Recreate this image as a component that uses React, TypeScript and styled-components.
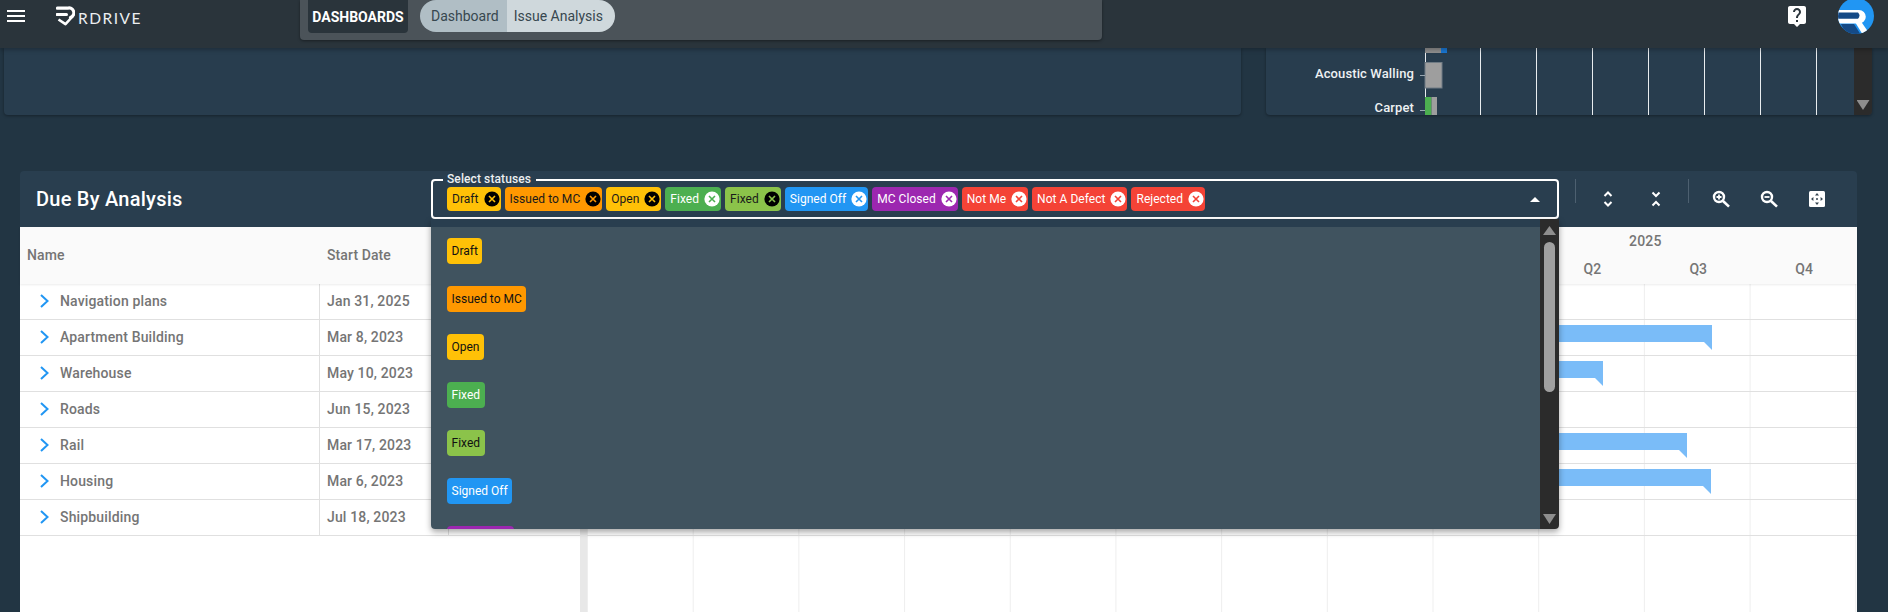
import React from "react";
import styled, { createGlobalStyle } from "styled-components";

const Global = createGlobalStyle`
  html, body { margin: 0; padding: 0; height: 612px; overflow: hidden; background: #223543; font-family: Roboto, "Liberation Sans", sans-serif; }
  #root { height: 612px; }
  * { box-sizing: border-box; }
`;

const Page = styled.div`display:flex;flex-direction:column;height:612px;overflow:hidden;background:#223543;`;

const Header = styled.header`
  flex:0 0 48px;display:flex;align-items:flex-start;background:#2a343b;position:relative;z-index:5;
  box-shadow:0 2px 4px rgba(0,0,0,.25);
`;
const Burger = styled.div`
  margin:10px 0 0 7px;width:18px;height:12px;display:flex;flex-direction:column;justify-content:space-between;
  span{display:block;height:2px;background:#fff;}
`;
const Logo = styled.div`display:flex;margin:5px 0 0 31px;width:244px;`;
const LogoText = styled.span`
  font-family:Lato,Roboto,sans-serif;font-size:15.5px;font-weight:400;color:#eceff1;letter-spacing:1.5px;line-height:20px;margin:3px 0 0 3px;
`;
const NavPanel = styled.nav`
  width:802px;height:40px;background:#4b5359;border-radius:0 0 4px 4px;display:flex;align-items:flex-start;padding-left:8px;
  box-shadow:0 1px 3px rgba(0,0,0,.4);
`;
const NavLabel = styled.div`
  width:100px;height:33px;background:#2a343b;border-radius:0 0 4px 4px;color:#fff;font-size:14px;font-weight:700;
  display:flex;align-items:center;justify-content:center;
`;
const Pills = styled.div`display:flex;margin-left:12px;height:32px;overflow:hidden;border-radius:16px;`;
const Pill = styled.div<{ $active?: boolean }>`
  background:${(p) => (p.$active ? "#cfd8dc" : "#b0bec5")};color:#37474f;font-size:14px;display:flex;align-items:center;
  padding:${(p) => (p.$active ? "0 12px 0 7px" : "0 8px 0 11px")};height:32px;
`;
const HeaderRight = styled.div`margin-left:auto;display:flex;align-items:flex-start;padding-right:14px;`;
const HelpIcon = styled.svg`width:24px;height:24px;margin-top:4px;fill:#fff;`;
const Avatar = styled.svg`width:36px;height:34px;margin-left:29px;display:block;`;

const TopRow = styled.section`flex:0 0 67px;display:flex;padding:0 16px 0 4px;gap:25px;`;
const TopPanel = styled.div<{ $w: number }>`
  width:${(p) => p.$w}px;height:67px;background:#283d4e;border-radius:0 0 4px 4px;display:flex;overflow:hidden;
  box-shadow:0 1px 3px rgba(0,0,0,.35);
`;
const ChartSvg = styled.svg`flex:1;height:67px;display:block;`;
const ChartLabel = styled.text`font:500 13px Roboto,sans-serif;fill:#eef1f3;letter-spacing:.12px;`;
const PanelScroll = styled.div`flex:0 0 18px;background:#2b2b2b;display:flex;flex-direction:column;justify-content:flex-end;align-items:center;padding-bottom:5px;`;
const ArrowDown = styled.div`width:13px;height:10px;background:#8e8e8e;clip-path:polygon(0 0,100% 0,50% 100%);`;
const ArrowUp = styled.div`width:13px;height:9px;background:#8e8e8e;clip-path:polygon(50% 0,100% 100%,0 100%);`;

const Card = styled.section`flex:1;margin:56px 31px 0 20px;display:flex;flex-direction:column;border-radius:4px 4px 0 0;min-height:0;`;
const CardHeader = styled.div`
  flex:0 0 56px;background:#293e4f;border-radius:4px 4px 0 0;display:flex;align-items:flex-start;padding:8px 0 0 16px;position:relative;z-index:3;
`;
const Title = styled.h2`flex:0 0 395px;margin:0;height:40px;display:flex;align-items:center;font-size:20px;font-weight:500;color:#fff;letter-spacing:.25px;`;
const Select = styled.div`
  flex:0 0 1128px;height:40px;border:2px solid #fff;border-radius:4px;position:relative;display:flex;align-items:center;padding:0 0 0 14px;gap:4px;
`;
const SelectLabel = styled.label`
  position:absolute;top:-9px;left:10px;padding:0 5px 0 4px;background:#293e4f;color:#eceff1;font-size:12px;line-height:14px;font-weight:500;letter-spacing:.1px;
`;
const Chip = styled.div<{ $bg: string; $dark?: boolean }>`
  height:24px;border-radius:4px;background:${(p) => p.$bg};color:${(p) => (p.$dark ? "#1a1a1a" : "#fff")};
  display:flex;align-items:center;font-size:12px;padding:0 1px 0 5px;gap:5px;white-space:nowrap;letter-spacing:.035px;
`;
const ChipX = styled.svg`width:16px;height:16px;flex:none;display:block;`;
const Caret = styled.div`position:absolute;right:17px;top:16px;width:10px;height:5px;background:#fff;clip-path:polygon(50% 0,100% 100%,0 100%);`;
const Dropdown = styled.div`
  position:absolute;left:-2px;right:-2px;top:38px;height:310px;display:flex;border-radius:0 0 4px 4px;overflow:hidden;
  box-shadow:0 3px 6px rgba(0,0,0,.35);z-index:4;
`;
const List = styled.div`
  flex:1;background:linear-gradient(#293e4f 8px,#40535f 8px);padding:19px 0 0 16px;display:flex;flex-direction:column;gap:22px;overflow:hidden;align-items:flex-start;
`;
const OptionChip = styled.div<{ $bg: string; $dark?: boolean }>`
  flex:none;height:26px;border-radius:4px;background:${(p) => p.$bg};color:${(p) => (p.$dark ? "#111" : "#fff")};
  display:flex;align-items:center;font-size:12px;padding:0 4.5px;white-space:nowrap;
`;
const Track = styled.div`flex:0 0 19px;background:#2b2b2b;display:flex;flex-direction:column;align-items:center;padding:7px 0 5px;`;
const Thumb = styled.div`width:11px;height:150px;margin-top:7px;margin-bottom:auto;border-radius:6px;background:#a0a0a0;`;
const Toolbar = styled.div`display:flex;align-items:flex-start;padding-left:16px;`;
const Divider = styled.div<{ $ml?: number }>`width:1px;height:24px;background:#4d6070;margin:0 8px 0 ${(p) => p.$ml ?? 0}px;`;
const ToolButton = styled.div`width:48px;height:40px;display:flex;align-items:center;justify-content:center;`;
const ToolIcon = styled.svg`width:20px;height:20px;display:block;`;

const Body = styled.div`flex:1;display:flex;background:#fff;min-height:0;position:relative;z-index:1;`;
const LeftPane = styled.div`flex:0 0 560px;display:flex;flex-direction:column;`;
const Splitter = styled.div`flex:0 0 7px;background:#e8e8e8;`;
const RightPane = styled.div`flex:1;display:flex;flex-direction:column;min-width:0;`;
const HeadRow = styled.div`
  flex:0 0 57px;display:grid;grid-template-columns:300px 129px 1fr;background:#fafafa;box-shadow:0 1px 2px rgba(0,0,0,.08);position:relative;z-index:1;
`;
const HeadCell = styled.div`padding:0 0 1px 7px;display:flex;align-items:center;font-size:14px;font-weight:500;color:#757575;letter-spacing:.1px;`;
const Row = styled.div`height:36px;display:grid;grid-template-columns:300px 129px 1fr;border-bottom:1px solid #e0e0e0;`;
const NameCell = styled.div`
  display:flex;align-items:center;padding:0 0 2px 20px;gap:11px;border-right:1px solid #e0e0e0;font-size:14px;font-weight:500;color:#757575;letter-spacing:.15px;
`;
const Chevron = styled.svg`width:9px;height:14px;flex:none;`;
const DateCell = styled.div`display:flex;align-items:center;padding:0 0 2px 7px;border-right:1px solid #e0e0e0;font-size:14px;font-weight:500;color:#757575;letter-spacing:.15px;`;
const Timeline = styled.div`
  flex:0 0 57px;display:grid;grid-template-columns:repeat(12,1fr);grid-template-rows:28px 28px;background:#fafafa;box-shadow:0 1px 2px rgba(0,0,0,.08);position:relative;z-index:1;
`;
const Year = styled.div`grid-column:9 / span 4;display:flex;align-items:center;justify-content:center;font-size:14px;font-weight:500;color:#757575;letter-spacing:.2px;`;
const Quarter = styled.div<{ $col: number }>`grid-row:2;grid-column:${(p) => p.$col};display:flex;align-items:center;justify-content:center;padding-bottom:1px;font-size:14px;font-weight:500;color:#757575;`;
const GanttBody = styled.div`
  flex:1;background-image:linear-gradient(to right,transparent calc(100% - 1px),#eeeeee calc(100% - 1px));background-size:105.7px 100%;background-position:1px 0;
`;
const GanttRow = styled.div`height:36px;border-bottom:1px solid #e0e0e0;`;
const Bar = styled.div<{ $start: number; $end: number }>`
  margin-left:${(p) => p.$start - 587}px;width:${(p) => p.$end - p.$start}px;height:25px;position:relative;top:5px;background:#7abcf8;
  clip-path:polygon(0 0,100% 0,100% 100%,calc(100% - 8px) 17px,0 17px);
`;

const statuses = [
  { name: "Draft", bg: "#ffc107", dark: true },
  { name: "Issued to MC", bg: "#ff9800", dark: true },
  { name: "Open", bg: "#ffc107", dark: true },
  { name: "Fixed", bg: "#4caf50" },
  { name: "Fixed", bg: "#8bc34a", dark: true },
  { name: "Signed Off", bg: "#2196f3" },
  { name: "MC Closed", bg: "#9c27b0" },
  { name: "Not Me", bg: "#f44336" },
  { name: "Not A Defect", bg: "#f44336" },
  { name: "Rejected", bg: "#f44336" },
];

const rows = [
  { name: "Navigation plans", date: "Jan 31, 2025" },
  { name: "Apartment Building", date: "Mar 8, 2023", end: 1712 },
  { name: "Warehouse", date: "May 10, 2023", end: 1603 },
  { name: "Roads", date: "Jun 15, 2023" },
  { name: "Rail", date: "Mar 17, 2023", end: 1687 },
  { name: "Housing", date: "Mar 6, 2023", end: 1711 },
  { name: "Shipbuilding", date: "Jul 18, 2023" },
];

const XIcon = ({ fill, stroke }: { fill: string; stroke: string }) => (
  <ChipX viewBox="0 0 16 16">
    <circle cx="8" cy="8" r="7.6" fill={fill} />
    <path d="M5 5l6 6M11 5l-6 6" stroke={stroke} strokeWidth="1.6" fill="none" />
  </ChipX>
);

const Lens = ({ minus }: { minus?: boolean }) => (
  <ToolIcon viewBox="0 0 20 20" fill="none" stroke="#fff">
    <circle cx="8" cy="8" r="5" strokeWidth="2.4" />
    <path d="M12 12l6 5.6" strokeWidth="2.6" />
    <path d={minus ? "M5.5 8h5" : "M5.5 8h5M8 5.5v5"} strokeWidth="1.8" />
  </ToolIcon>
);

export default function App() {
  return (
    <Page>
      <Global />
      <Header>
        <Burger>
          <span />
          <span />
          <span />
        </Burger>
        <Logo>
          <svg width="19" height="21" viewBox="0 0 19 21" fill="none" stroke="#fff">
            <path d="M1.5 3.2H11.5A4.6 4.6 0 0 1 14.5 12.5" strokeWidth="3.2" strokeLinecap="round" />
            <path d="M1 9.4H10.5" strokeWidth="3" strokeLinecap="round" />
            <path d="M2.5 14.5L9.5 19.2L16.5 11.5" strokeWidth="2.6" strokeLinejoin="round" />
          </svg>
          <LogoText>RDRIVE</LogoText>
        </Logo>
        <NavPanel>
          <NavLabel>DASHBOARDS</NavLabel>
          <Pills>
            <Pill>Dashboard</Pill>
            <Pill $active>Issue Analysis</Pill>
          </Pills>
        </NavPanel>
        <HeaderRight>
          <HelpIcon viewBox="0 0 24 24">
            <path d="M19 2H5c-1.11 0-2 .9-2 2v14c0 1.1.89 2 2 2h4l3 3 3-3h4c1.1 0 2-.9 2-2V4c0-1.1-.9-2-2-2zm-6 16h-2v-2h2v2zm2.07-7.75l-.9.92C13.45 11.9 13 12.5 13 14h-2v-.5c0-1.1.45-2.1 1.17-2.83l1.24-1.26c.37-.36.59-.86.59-1.41 0-1.1-.9-2-2-2s-2 .9-2 2H8c0-2.21 1.79-4 4-4s4 1.79 4 4c0 .88-.36 1.68-.93 2.25z" />
          </HelpIcon>
          <Avatar viewBox="0 0 36 34">
            <defs>
              <clipPath id="av">
                <circle cx="18" cy="16" r="18" />
              </clipPath>
            </defs>
            <g clipPath="url(#av)">
              <rect x="0" y="-2" width="36" height="36" fill="#2196f3" />
              <path d="M0 10H21A6.8 6.8 0 0 1 21 23.6H0Z" fill="#fff" />
              <path d="M0 12.4H20A4.2 4.2 0 0 1 20 18.8H0Z" fill="#154a86" />
              <path d="M3 24H16L23 35H8Z" fill="#154a86" />
              <path d="M17 22L23 21.5L31 33L25 35Z" fill="#fff" />
            </g>
          </Avatar>
        </HeaderRight>
      </Header>
      <TopRow>
        <TopPanel $w={1237} />
        <TopPanel $w={606}>
          <ChartSvg viewBox="0 0 588 67">
            {[214.5, 270.5, 326.5, 382.5, 438.5, 494.5, 550.5].map((x) => (
              <line key={x} x1={x} x2={x} y1="0" y2="67" stroke="#e8ecef" />
            ))}
            <line x1="159.5" x2="159.5" y1="0" y2="67" stroke="#e8ecef" />
            <rect x="159" y="0" width="16" height="5" fill="#8e8e8e" />
            <rect x="175" y="0" width="6" height="5" fill="#1976d2" />
            <rect x="159" y="14.5" width="17" height="25.5" fill="#9e9e9e" stroke="#6f7b84" />
            <rect x="159" y="49" width="6.5" height="18" fill="#4caf50" />
            <rect x="165.5" y="49" width="5.5" height="18" fill="#9e9e9e" />
            <line x1="154" x2="159" y1="27.5" y2="27.5" stroke="#9aa7b1" />
            <line x1="154" x2="159" y1="62.5" y2="62.5" stroke="#9aa7b1" />
            <ChartLabel x="148" y="30" textAnchor="end">Acoustic Walling</ChartLabel>
            <ChartLabel x="148" y="64" textAnchor="end">Carpet</ChartLabel>
          </ChartSvg>
          <PanelScroll>
            <ArrowDown />
          </PanelScroll>
        </TopPanel>
      </TopRow>
      <Card>
        <CardHeader>
          <Title>Due By Analysis</Title>
          <Select>
            <SelectLabel>Select statuses</SelectLabel>
            {statuses.map((s, i) => (
              <Chip key={i} $bg={s.bg} $dark={s.dark}>
                {s.name}
                <XIcon fill={s.dark ? "#000" : "#fff"} stroke={s.bg} />
              </Chip>
            ))}
            <Caret />
            <Dropdown>
              <List>
                {statuses.slice(0, 7).map((s, i) => (
                  <OptionChip key={i} $bg={s.bg} $dark={s.dark}>
                    {s.name}
                  </OptionChip>
                ))}
              </List>
              <Track>
                <ArrowUp />
                <Thumb />
                <ArrowDown />
              </Track>
            </Dropdown>
          </Select>
          <Toolbar>
            <Divider />
            <ToolButton>
              <ToolIcon viewBox="0 0 20 20" fill="none" stroke="#fff" strokeWidth="2">
                <path d="M6.5 7L10 3.5L13.5 7M6.5 13L10 16.5L13.5 13" />
              </ToolIcon>
            </ToolButton>
            <ToolButton>
              <ToolIcon viewBox="0 0 20 20" fill="none" stroke="#fff" strokeWidth="2">
                <path d="M6.5 3.5L10 7L13.5 3.5M6.5 16.5L10 13L13.5 16.5" />
              </ToolIcon>
            </ToolButton>
            <Divider $ml={8} />
            <ToolButton>
              <Lens />
            </ToolButton>
            <ToolButton>
              <Lens minus />
            </ToolButton>
            <ToolButton>
              <ToolIcon viewBox="0 0 20 20">
                <rect x="2" y="2" width="16" height="16" rx="1.5" fill="#fff" />
                <path d="M10 4l2 2.4h-4zM10 16l-2-2.4h4zM4 10l2.4-2v4zM16 10l-2.4 2v-4z" fill="#33434f" />
                <circle cx="10" cy="10" r="1" fill="#33434f" />
              </ToolIcon>
            </ToolButton>
          </Toolbar>
        </CardHeader>
        <Body>
          <LeftPane>
            <HeadRow>
              <HeadCell>Name</HeadCell>
              <HeadCell>Start Date</HeadCell>
              <div />
            </HeadRow>
            {rows.map((r) => (
              <Row key={r.name}>
                <NameCell>
                  <Chevron viewBox="0 0 9 14" fill="none" stroke="#2196f3" strokeWidth="2">
                    <path d="M1 1l6.5 6L1 13" />
                  </Chevron>
                  {r.name}
                </NameCell>
                <DateCell>{r.date}</DateCell>
                <div />
              </Row>
            ))}
          </LeftPane>
          <Splitter />
          <RightPane>
            <Timeline>
              <Year>2025</Year>
              <Quarter $col={10}>Q2</Quarter>
              <Quarter $col={11}>Q3</Quarter>
              <Quarter $col={12}>Q4</Quarter>
            </Timeline>
            <GanttBody>
              {rows.map((r) => (
                <GanttRow key={r.name}>{r.end ? <Bar $start={1300} $end={r.end} /> : null}</GanttRow>
              ))}
            </GanttBody>
          </RightPane>
        </Body>
      </Card>
    </Page>
  );
}
